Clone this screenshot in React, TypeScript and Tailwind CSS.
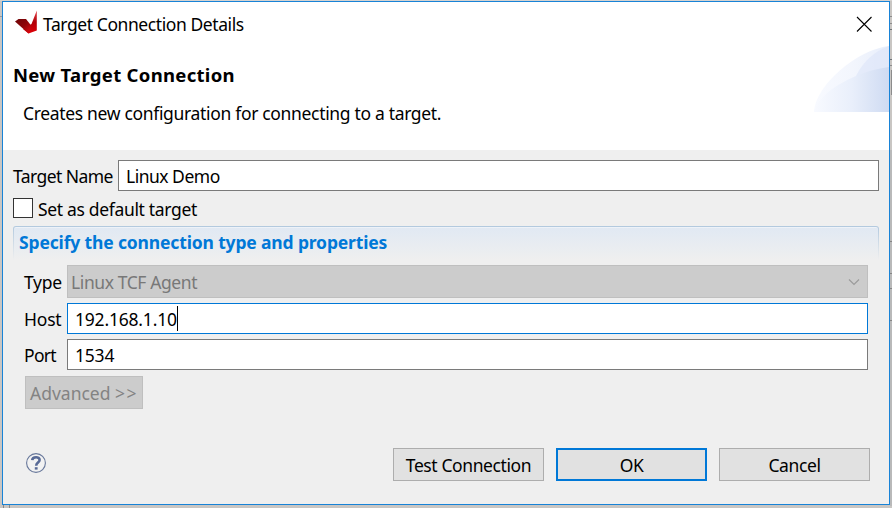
import type { ReactNode } from "react";

function Field({ label, value, className, labelClass, active = false }: { label: string; value: string; className: string; labelClass: string; active?: boolean }) {
  return (
    <div className={`flex h-[31px] ${className}`}>
      <span className={`w-[43px] shrink-0 leading-[33px] ${labelClass}`}>{label}</span>
      <div className={`flex h-[31px] w-[801px] items-center border bg-white pl-[7px] ${active ? "border-[#0078d7]" : "border-[#7a7a7a]"}`}>
        <span className="leading-[31px] tracking-[-0.2px] pt-px">{value}</span>
        {active && <span className="-mt-px h-[25px] w-px bg-black" />}
      </div>
    </div>
  );
}

function Button({ children, primary = false }: { children: ReactNode; primary?: boolean }) {
  return (
    <button
      className={`flex h-[33px] w-[151px] items-center justify-center bg-[#e1e1e1] pt-0.5 tracking-[-0.4px] ${
        primary ? "border-2 border-[#0078d7]" : "border border-[#adadad]"
      }`}
    >
      {children}
    </button>
  );
}

function Background() {
  return (
    <svg className="absolute inset-0" width="892" height="508" shapeRendering="crispEdges">
      <rect width="892" height="508" fill="#c9c6c3" />
      <rect width="892" height="1" fill="#d6d3d0" />
      <rect x="0" y="16" width="2" height="1" fill="#9a9a9a" />
      <rect x="890" y="16" width="2" height="1" fill="#8c8c8c" />
      <rect x="890" y="23" width="2" height="1" fill="#8c8c8c" />
      <rect x="890" y="29" width="2" height="1" fill="#6f7478" />
      <rect x="890" y="59" width="2" height="1" fill="#6f7478" />
      <rect x="890" y="65" width="2" height="1" fill="#8c8c8c" />
      <rect x="891" y="70" width="1" height="25" fill="#8c8c8c" />
      <rect x="890" y="150" width="2" height="356" fill="#b9b9b9" />
      <rect x="890" y="241" width="2" height="1" fill="#858585" />
      <rect x="890" y="273" width="2" height="1" fill="#858585" />
      <rect x="890" y="288" width="2" height="1" fill="#858585" />
      <rect x="890" y="320" width="2" height="1" fill="#858585" />
      <rect x="3" y="505" width="1" height="3" fill="#888" />
      <rect x="9" y="505" width="1" height="3" fill="#888" />
    </svg>
  );
}

export default function App() {
  return (
    <div className="relative h-[508px] w-[892px] overflow-hidden pl-0.5 pt-px font-['Noto_Sans','Open_Sans',sans-serif] text-[17.5px] text-black whitespace-nowrap">
      <Background />
      <div className="relative flex h-[504px] w-[888px] flex-col border border-[#1883d7] bg-[#efefef]">
        <header className="relative h-[148px] shrink-0 bg-white">
          <div className="flex h-[45px] items-center pl-3">
            <svg className="-mt-1.5" width="22" height="24" viewBox="0 0 22 24">
              <defs>
                <linearGradient id="wing" x1="0" y1="0" x2="1" y2="1">
                  <stop offset="0" stopColor="#6d0508" />
                  <stop offset="0.5" stopColor="#8f0508" />
                  <stop offset="1" stopColor="#e90a12" />
                </linearGradient>
                <linearGradient id="blade" x1="0" y1="0" x2="0" y2="1">
                  <stop offset="0" stopColor="#e8444a" />
                  <stop offset="0.5" stopColor="#b00008" />
                  <stop offset="1" stopColor="#e00008" />
                </linearGradient>
              </defs>
              <path d="M16.5 14 21.8 0.5 21.8 20.5 13.5 23.5 8 19Z" fill="url(#blade)" />
              <path d="M0 11.5 3.5 9 11 9 16.5 16 13.5 23.5Z" fill="url(#wing)" />
            </svg>
            <span className="ml-[6px] tracking-[-0.42px]">Target Connection Details</span>
            <svg className="-mt-px ml-auto mr-4" width="17" height="17" viewBox="0 0 17 17">
              <path d="M1 1 15.5 15.5M15.5 1 1 15.5" stroke="#000" strokeWidth="1.1" />
            </svg>
          </div>
          <h1 className="mt-[14px] pl-[10px] text-[18.5px] font-bold leading-[27px] tracking-[0.3px]">New Target Connection</h1>
          <p className="mt-[12px] pl-5 leading-[27px] tracking-[-0.33px]">Creates new configuration for connecting to a target.</p>
          <svg className="absolute right-0 top-[44px]" width="75" height="66" viewBox="0 0 75 66">
            <defs>
              <linearGradient id="swoosh">
                <stop offset="0" stopColor="#f8faff" />
                <stop offset="0.5" stopColor="#f3f6fd" />
                <stop offset="1" stopColor="#e8eefb" />
              </linearGradient>
              <linearGradient id="swooshFront">
                <stop offset="0" stopColor="#f8faff" />
                <stop offset="0.5" stopColor="#e9effb" />
                <stop offset="1" stopColor="#cfdbf2" />
              </linearGradient>
            </defs>
            <path d="M0 66C1 40 42 4 75 0V66Z" fill="url(#swoosh)" />
            <path d="M42 30Q53 8 75 0V30Z" fill="#dce5f8" opacity=".6" />
            <path d="M0 66C5 45 43 25 75 21V66Z" fill="url(#swooshFront)" />
          </svg>
        </header>
        <main className="flex flex-col pl-[10px] pt-[10px]">
          <div className="flex h-[31px]">
            <span className="w-[105px] shrink-0 leading-[33px] tracking-[-0.57px]">Target Name</span>
            <div className="h-[31px] w-[761px] border border-[#7a7a7a] bg-white pl-[7px] leading-[31px] tracking-[-0.5px]">Linux Demo</div>
          </div>
          <div className="mt-[7px] flex h-5 items-center">
            <span className="h-5 w-5 border border-[#333] bg-white" />
            <span className="ml-[5px] mt-0.5 tracking-[-0.33px]">Set as default target</span>
          </div>
          <section className="mt-2 w-[866px]">
            <div className="h-[34px] rounded-t-[3px] bg-linear-to-b from-[#b2c9de] to-[#efefef] px-px pt-px">
              <div className="h-[33px] rounded-t-[2px] border-t border-[#eef2f8] bg-linear-to-b from-[#e1e9f3] to-[#efefef] pl-[5px] text-[17.5px] font-bold leading-[29px] tracking-[-0.15px] text-[#0078d7]">
                Specify the connection type and properties
              </div>
            </div>
            <div className="pl-[11px]">
              <div className="mt-[5px] flex h-[33px]">
                <span className="w-[43px] shrink-0 leading-[35px] tracking-[-0.3px]">Type</span>
                <div className="flex h-[33px] w-[801px] items-center justify-between border border-[#bfbfbf] bg-[#ccc] pl-[3px] pr-[7px] text-[#787878]">
                  <span className="pt-px leading-[33px] tracking-[-0.4px]">Linux TCF Agent</span>
                  <svg width="12" height="8" viewBox="0 0 12 8" fill="none" stroke="#9b9b9b" strokeWidth="1.2">
                    <path d="M1 1.5 6 6.5 11 1.5" />
                  </svg>
                </div>
              </div>
              <Field className="mt-[5px]" label="Host" labelClass="tracking-[-0.2px]" value="192.168.1.10" active />
              <Field className="mt-[5px]" label="Port" labelClass="tracking-[-0.7px]" value="1534" />
              <button className="ml-px mt-[6px] block h-[33px] w-[118px] border border-[#bfbfbf] bg-[#ccc] pl-1 text-left leading-[33px] text-[#838383]">
                Advanced <span className="tracking-[1.5px]">&gt;&gt;</span>
              </button>
            </div>
          </section>
        </main>
        <footer className="mt-[39px] flex h-[33px] items-center pl-[23px]">
          <svg className="-mt-1" width="20" height="20" viewBox="0 0 20 20">
            <circle cx="10" cy="10" r="9.4" fill="#f2f2f2" stroke="#67779a" strokeWidth="1.1" />
            <path d="M6.2 7.2C6.6 3.4 13.6 3.2 13.6 7 13.6 9.7 10.2 9.6 10.2 12.8" fill="none" stroke="#586a96" strokeWidth="2.6" />
            <rect x="8.8" y="14.2" width="2.8" height="2.4" fill="#586a96" />
          </svg>
          <div className="ml-[347px] flex gap-3">
            <Button>Test Connection</Button>
            <Button primary>OK</Button>
            <Button>Cancel</Button>
          </div>
        </footer>
      </div>
    </div>
  );
}
